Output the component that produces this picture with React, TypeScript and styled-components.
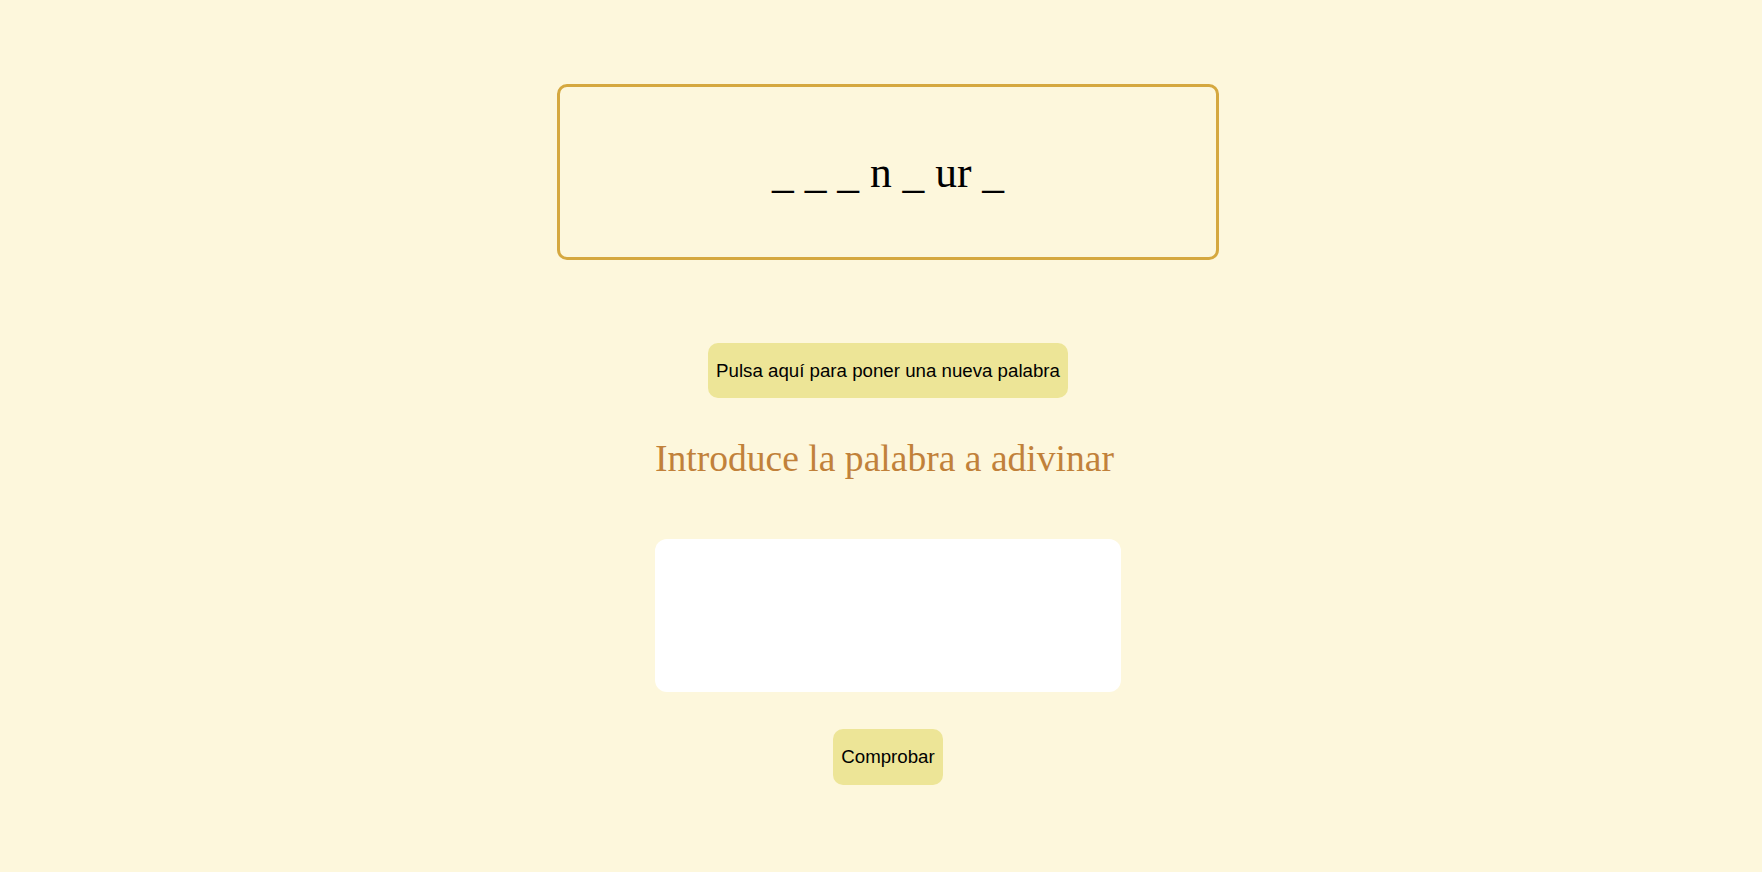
import React from "react";
import styled, { createGlobalStyle } from "styled-components";

const GlobalStyle = createGlobalStyle`
  html, body {
    margin: 0;
    padding: 0;
    background: #fdf7dc;
  }
  body {
    font-family: "Liberation Serif", "Times New Roman", serif;
  }
`;

const Page = styled.main`
  display: flex;
  flex-direction: column;
  align-items: center;
  padding: 84px 0 40px 14px;
  min-height: 100vh;
  box-sizing: border-box;
`;

const WordBox = styled.div`
  box-sizing: border-box;
  width: 662px;
  height: 176px;
  border: 3px solid #d5a83f;
  border-radius: 10px;
  display: flex;
  align-items: center;
  justify-content: center;
  font-family: "Liberation Serif", "Times New Roman", serif;
  font-size: 43.5px;
  color: #000;
  white-space: pre;
`;

const PillButton = styled.button<{ $top: number; $height: number }>`
  margin-top: ${(p) => p.$top}px;
  height: ${(p) => p.$height}px;
  padding: 0 8px;
  border: none;
  border-radius: 10px;
  background: #ede597;
  color: #000;
  font-family: "Liberation Sans", Arial, sans-serif;
  font-size: 18.7px;
  cursor: pointer;
`;

const Heading = styled.h2`
  margin: 39px 7px 0 0;
  font-family: "Liberation Serif", "Times New Roman", serif;
  font-weight: normal;
  font-size: 37.6px;
  color: #c1813a;
`;

const GuessInput = styled.textarea`
  margin-top: 59px;
  box-sizing: border-box;
  width: 466px;
  height: 153px;
  border: none;
  border-radius: 12px;
  background: #fff;
  resize: none;
  outline: none;
  font-family: "Liberation Sans", Arial, sans-serif;
  font-size: 18px;
`;

export default function App() {
  return (
    <>
      <GlobalStyle />
      <Page>
        <WordBox>_ _ _ n _ ur _</WordBox>
        <PillButton $top={83} $height={55}>
          Pulsa aquí para poner una nueva palabra
        </PillButton>
        <Heading>Introduce la palabra a adivinar</Heading>
        <GuessInput />
        <PillButton $top={37} $height={56}>
          Comprobar
        </PillButton>
      </Page>
    </>
  );
}
